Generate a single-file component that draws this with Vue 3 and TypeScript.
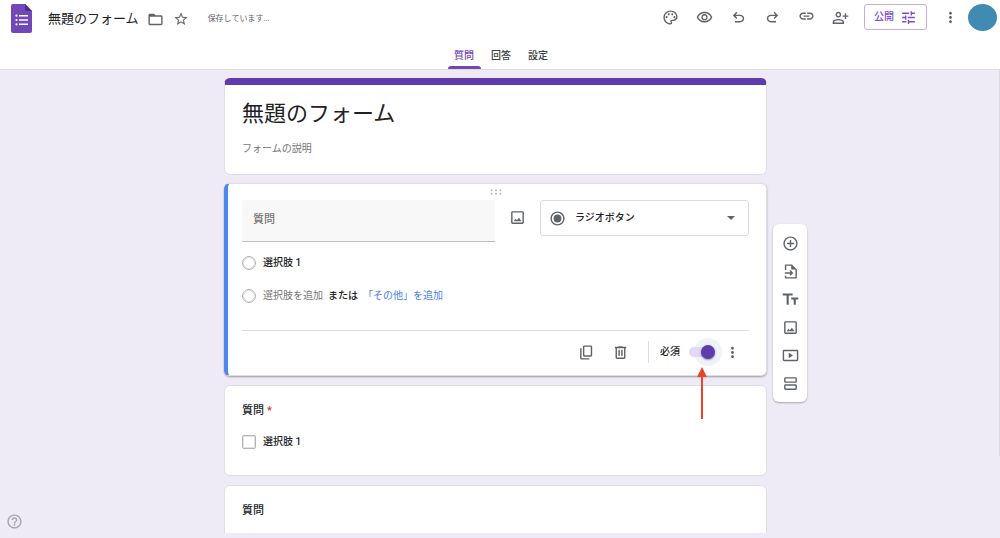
<script setup lang="ts">
import { ref } from 'vue'

interface Icon {
  label: string
  d: string
}

const tabs = ['質問', '回答', '設定']
const activeTab = ref('質問')
const formTitle = ref('無題のフォーム')
const description = ref('')
const question = ref('')
const questionType = ref('radio')
const required = ref(true)

const imagePath =
  'M19 5v14H5V5h14m0-2H5c-1.1 0-2 .9-2 2v14c0 1.1.9 2 2 2h14c1.1 0 2-.9 2-2V5c0-1.1-.9-2-2-2zM6.5 17.2l2.7-3.4 2 2.2 2.8-3.6 3.7 4.8z'
const morePath =
  'M12 8c1.1 0 2-.9 2-2s-.9-2-2-2-2 .9-2 2 .9 2 2 2zm0 2c-1.1 0-2 .9-2 2s.9 2 2 2 2-.9 2-2-.9-2-2-2zm0 6c-1.1 0-2 .9-2 2s.9 2 2 2 2-.9 2-2-.9-2-2-2z'

const headerActions: Icon[] = [
  {
    label: 'テーマをカスタマイズ',
    d: 'M12 22C6.49 22 2 17.51 2 12S6.49 2 12 2s10 4.04 10 9c0 3.31-2.69 6-6 6h-1.77c-.28 0-.5.22-.5.5 0 .12.05.23.13.33.41.47.64 1.06.64 1.67A2.5 2.5 0 0 1 12 22zm0-18c-4.41 0-8 3.59-8 8s3.59 8 8 8c.28 0 .5-.22.5-.5a.54.54 0 0 0-.14-.35c-.41-.46-.63-1.05-.63-1.65a2.5 2.5 0 0 1 2.5-2.5H16c2.21 0 4-1.79 4-4 0-3.86-3.59-7-8-7zM6.5 10a1.5 1.5 0 1 1 0 3 1.5 1.5 0 0 1 0-3zM9.5 6a1.5 1.5 0 1 1 0 3 1.5 1.5 0 0 1 0-3zM14.5 6a1.5 1.5 0 1 1 0 3 1.5 1.5 0 0 1 0-3zM17.5 10a1.5 1.5 0 1 1 0 3 1.5 1.5 0 0 1 0-3z',
  },
  {
    label: 'プレビュー',
    d: 'M12 6c3.79 0 7.17 2.13 8.82 5.5C19.17 14.87 15.79 17 12 17s-7.17-2.13-8.82-5.5C4.83 8.13 8.21 6 12 6m0-2C7 4 2.73 7.11 1 11.5 2.73 15.89 7 19 12 19s9.27-3.11 11-7.5C21.27 7.11 17 4 12 4zm0 5c1.38 0 2.5 1.12 2.5 2.5S13.38 14 12 14s-2.5-1.12-2.5-2.5S10.62 9 12 9m0-2c-2.48 0-4.5 2.02-4.5 4.5S9.52 16 12 16s4.5-2.02 4.5-4.5S14.48 7 12 7z',
  },
  {
    label: '元に戻す',
    d: 'M7 19v-2h7.1q1.575 0 2.738-1T18 13.5 16.838 11 14.1 10H7.8l2.6 2.6L9 14 4 9l5-5 1.4 1.4L7.8 8h6.3q2.425 0 4.163 1.575T20 13.5t-1.737 3.925T14.1 19z',
  },
  {
    label: 'やり直す',
    d: 'M17 19v-2H9.9q-1.575 0-2.738-1T6 13.5 7.162 11 9.9 10h6.3l-2.6 2.6L15 14l5-5-5-5-1.4 1.4L16.2 8H9.9q-2.425 0-4.163 1.575T4 13.5t1.737 3.925T9.9 19z',
  },
  {
    label: '回答者へのリンクをコピー',
    d: 'M3.9 10c0-1.71 1.39-3.1 3.1-3.1h4V5H7c-2.76 0-5 2.24-5 5s2.24 5 5 5h4v-1.9H7c-1.71 0-3.1-1.39-3.1-3.1zM8 11h8V9H8v2zm9-6h-4v1.9h4c1.71 0 3.1 1.39 3.1 3.1s-1.39 3.1-3.1 3.1h-4V15h4c2.76 0 5-2.24 5-5s-2.24-5-5-5z',
  },
  {
    label: '共同編集者を追加',
    d: 'M20 9V6h-2v3h-3v2h3v3h2v-3h3V9h-3zM9 12c2.21 0 4-1.79 4-4s-1.79-4-4-4-4 1.79-4 4 1.79 4 4 4zm0-6c1.1 0 2 .9 2 2s-.9 2-2 2-2-.9-2-2 .9-2 2-2zm0 8c-2.67 0-8 1.34-8 4v3h16v-3c0-2.66-5.33-4-8-4zm6 5H3v-1c.2-.71 3.3-2 6-2s5.8 1.29 6 2z',
  },
]

const sideTools: Icon[] = [
  {
    label: '質問を追加',
    d: 'M13 7h-2v4H7v2h4v4h2v-4h4v-2h-4V7zm-1-5C6.48 2 2 6.48 2 12s4.48 10 10 10 10-4.48 10-10S17.52 2 12 2zm0 18c-4.41 0-8-3.59-8-8s3.59-8 8-8 8 3.59 8 8-3.59 8-8 8z',
  },
  {
    label: '質問をインポート',
    d: 'M14 2H5.5C4.600 2 4 2.600 4 3.500V10h2V4h7v5h6v11H6v-2H4v2.500c0 .9.6 1.500 1.500 1.500h14c.9 0 1.500-.6 1.500-1.500V9zM12 10l-1.400 1.400 1.600 1.600H4v2h8.200l-1.600 1.600L12 18l4-4z',
  },
  {
    label: 'タイトルと説明を追加',
    d: 'M1 3.500v3h5.500v13h3v-13H15v-3H1zm22 5.500H13v3h3.500v7.500h3V12H23V9z',
  },
  { label: '画像を追加', d: imagePath },
  {
    label: '動画を追加',
    d: 'M21 4H3c-1.100 0-2 .9-2 2v12c0 1.100.9 2 2 2h18c1.100 0 2-.9 2-2V6c0-1.100-.9-2-2-2zm0 14H3V6h18v12zM9.500 8v8l6-4z',
  },
  {
    label: 'セクションを追加',
    d: 'M19 13H5c-1.100 0-2 .9-2 2v4c0 1.100.9 2 2 2h14c1.100 0 2-.9 2-2v-4c0-1.100-.9-2-2-2zm0 6H5v-4h14v4zM19 3H5c-1.100 0-2 .9-2 2v4c0 1.100.9 2 2 2h14c1.100 0 2-.9 2-2V5c0-1.100-.9-2-2-2zm0 6H5V5h14v4z',
  },
]
</script>

<template>
  <div class="page">
    <header class="header">
      <div class="bar">
        <a class="logo" href="#" aria-label="フォーム ホーム">
          <svg width="21" height="29" viewBox="0 0 21 29">
            <path d="M2 0h12l7 7v20a2 2 0 0 1-2 2H2a2 2 0 0 1-2-2V2a2 2 0 0 1 2-2z" fill="#7248b9" />
            <path d="M14 0l7 7h-7z" fill="#4f2d8c" />
            <g fill="#fff">
              <circle cx="5.500" cy="11.700" r="1.100" />
              <circle cx="5.500" cy="16" r="1.100" />
              <circle cx="5.500" cy="20.300" r="1.100" />
              <path d="M8 10.900h9v1.600H8zM8 15.200h9v1.600H8zM8 19.500h9v1.600H8z" />
            </g>
          </svg>
        </a>
        <h1 class="doc-title">{{ formTitle }}</h1>
        <button class="icon-btn folder" type="button" aria-label="フォルダに移動">
          <svg class="icon" viewBox="0 0 24 24">
            <path d="M20 6h-8l-2-2H4c-1.100 0-2 .9-2 2v12c0 1.100.9 2 2 2h16c1.100 0 2-.9 2-2V8c0-1.100-.9-2-2-2zm0 12H4V8h16z" />
          </svg>
        </button>
        <button class="icon-btn star" type="button" aria-label="スター">
          <svg class="icon" viewBox="0 0 24 24">
            <path d="M22 9.240l-7.190-.62L12 2 9.190 8.630 2 9.240l5.460 4.730L5.820 21 12 17.270 18.180 21l-1.630-7.030L22 9.240zM12 15.400l-3.760 2.270 1-4.280-3.320-2.880 4.380-.38L12 6.100l1.710 4.040 4.380.38-3.320 2.880 1 4.280L12 15.400z" />
          </svg>
        </button>
        <span class="saving">保存しています...</span>

        <div class="actions">
          <button v-for="a in headerActions" :key="a.label" class="icon-btn action" type="button" :aria-label="a.label">
            <svg class="icon" viewBox="0 0 24 24"><path :d="a.d" /></svg>
          </button>
        </div>
        <button class="publish" type="button">
          公開
          <svg class="icon" viewBox="0 0 24 24">
            <path d="M3 17v2h6v-2H3zM3 5v2h10V5H3zm10 16v-2h8v-2h-8v-2h-2v6h2zM7 9v2H3v2h4v2h2V9H7zm14 4v-2H11v2h10zm-6-4h2V7h4V5h-4V3h-2v6z" />
          </svg>
        </button>
        <button class="icon-btn menu" type="button" aria-label="その他">
          <svg class="icon" viewBox="0 0 24 24"><path :d="morePath" /></svg>
        </button>
        <button class="avatar" type="button" aria-label="アカウント"></button>
      </div>
      <nav class="tabs">
        <button
          v-for="t in tabs"
          :key="t"
          type="button"
          class="tab"
          :class="{ active: t === activeTab }"
          @click="activeTab = t"
        >
          {{ t }}
        </button>
      </nav>
    </header>

    <main class="canvas">
      <div class="column">
        <section class="card title-card">
          <input v-model="formTitle" class="form-title" type="text" aria-label="フォームのタイトル" />
          <input v-model="description" class="form-desc" type="text" placeholder="フォームの説明" aria-label="フォームの説明" />
        </section>

        <section class="card editing">
          <svg class="drag" width="12" height="6" viewBox="0 0 12 6" fill="#b4b6b9">
            <circle cx="1.500" cy="1.200" r="1" />
            <circle cx="6" cy="1.200" r="1" />
            <circle cx="10.500" cy="1.200" r="1" />
            <circle cx="1.500" cy="4.800" r="1" />
            <circle cx="6" cy="4.800" r="1" />
            <circle cx="10.500" cy="4.800" r="1" />
          </svg>
          <div class="question-row">
            <input v-model="question" class="question-input" type="text" placeholder="質問" aria-label="質問" />
            <button class="icon-btn add-image" type="button" aria-label="画像を追加">
              <svg class="icon" viewBox="0 0 24 24"><path :d="imagePath" /></svg>
            </button>
            <div class="type-box">
              <svg class="icon" viewBox="0 0 24 24">
                <circle cx="12" cy="12" r="9" fill="none" stroke="currentColor" stroke-width="2" />
                <circle cx="12" cy="12" r="5.500" />
              </svg>
              <select v-model="questionType" class="type-select" aria-label="質問の形式">
                <option value="radio">ラジオボタン</option>
              </select>
              <svg class="caret" width="8" height="4" viewBox="0 0 8 4"><path d="M0 0h8L4 4z" fill="#5f6368" /></svg>
            </div>
          </div>
          <div class="option first">
            <input id="edit-option" class="choice round" type="radio" name="edit" />
            <label for="edit-option">選択肢 1</label>
          </div>
          <div class="option second">
            <input class="choice round" type="radio" name="edit" aria-label="選択肢を追加" />
            <button class="text-btn muted" type="button">選択肢を追加</button>
            <span>または</span>
            <button class="text-btn link" type="button">「その他」を追加</button>
          </div>
          <footer class="card-footer">
            <button class="icon-btn foot" type="button" aria-label="コピーを作成">
              <svg class="icon" viewBox="0 0 24 24">
                <path d="M9 18q-.825 0-1.412-.587T7 16V4q0-.825.588-1.412T9 2h9q.825 0 1.413.588T20 4v12q0 .825-.587 1.413T18 18zm0-2h9V4H9zm-4 6q-.825 0-1.412-.587T3 20V6h2v14h11v2z" />
              </svg>
            </button>
            <button class="icon-btn foot" type="button" aria-label="削除">
              <svg class="icon" viewBox="0 0 24 24">
                <path d="M15 4V3H9v1H4v2h1v13c0 1.100.9 2 2 2h10c1.100 0 2-.9 2-2V6h1V4h-5zm2 15H7V6h10v13zM9 8h2v9H9zm4 0h2v9h-2z" />
              </svg>
            </button>
            <span class="rule"></span>
            <label class="required-label" for="required">必須</label>
            <span class="switch-wrap">
              <input id="required" v-model="required" class="switch" type="checkbox" />
              <svg class="pointer" width="12" height="52" viewBox="0 0 12 52" aria-hidden="true">
                <path d="M6 0l5 10H7v42H5V10H1z" fill="#ea4327" />
              </svg>
            </span>
            <button class="icon-btn more" type="button" aria-label="その他のオプション">
              <svg class="icon" viewBox="0 0 24 24"><path :d="morePath" /></svg>
            </button>
          </footer>
        </section>

        <section class="card plain">
          <h2 class="question-title">質問<span class="star-mark">*</span></h2>
          <div class="option boxed">
            <input id="check-option" class="choice" type="checkbox" />
            <label for="check-option">選択肢 1</label>
          </div>
        </section>

        <section class="card plain">
          <h2 class="question-title">質問</h2>
        </section>
      </div>

      <aside class="tools">
        <button v-for="t in sideTools" :key="t.label" class="icon-btn tool" type="button" :aria-label="t.label">
          <svg class="icon" viewBox="0 0 24 24"><path :d="t.d" /></svg>
        </button>
      </aside>
    </main>

    <span class="scroll-edge"></span>
    <button class="icon-btn help" type="button" aria-label="ヘルプ">
      <svg class="icon" viewBox="0 0 24 24">
        <path d="M11 18h2v-2h-2v2zm1-16C6.480 2 2 6.480 2 12s4.480 10 10 10 10-4.480 10-10S17.520 2 12 2zm0 18c-4.410 0-8-3.590-8-8s3.590-8 8-8 8 3.590 8 8-3.590 8-8 8zm0-14c-2.210 0-4 1.790-4 4h2c0-1.100.9-2 2-2s2 .9 2 2c0 2-3 1.750-3 5h2c0-2.250 3-2.500 3-5 0-2.210-1.790-4-4-4z" />
      </svg>
    </button>
  </div>
</template>

<style>
body {
  margin: 0;
  background: #eeebf6;
}
</style>

<style scoped>
.page {
  position: relative;
  display: flex;
  flex-direction: column;
  height: 100vh;
  box-sizing: border-box;
  padding-bottom: 5px;
  background: #eeebf6;
  color: #202124;
  font-family: Roboto, "Noto Sans CJK JP", sans-serif;
  font-size: 10px;
  font-weight: 500;
  line-height: 20px;
}

button,
input,
select {
  margin: 0;
  padding: 0;
  border: 0;
  background: none;
  color: inherit;
  font: inherit;
  box-sizing: border-box;
}

button {
  cursor: pointer;
}

.icon {
  display: block;
  width: 17px;
  height: 17px;
  fill: currentColor;
  flex: none;
}

.icon-btn {
  display: flex;
  align-items: center;
  justify-content: center;
  flex: none;
  color: #5f6368;
}

.header {
  flex: none;
  background: #fff;
  border-bottom: 1px solid #dddbe2;
}

.bar {
  display: flex;
  align-items: center;
  height: 34px;
  padding: 0 3px 0 11px;
}

.logo {
  display: flex;
  margin-top: 3px;
}

.doc-title {
  margin: 4px 0 0 16px;
  font-size: 13px;
  font-weight: 400;
  color: #202124;
  white-space: nowrap;
}

.folder {
  margin: 4px 0 0 8px;
}

.star {
  margin: 4px 0 0 9px;
}

.star .icon {
  width: 16px;
  height: 16px;
}

.saving {
  margin: 4px 0 0 19px;
  font-size: 8px;
  font-weight: 400;
  color: #5f6368;
  white-space: nowrap;
}

.actions {
  display: flex;
  margin-left: auto;
  padding-right: 7px;
}

.action {
  width: 34px;
  height: 34px;
}

.publish {
  display: flex;
  align-items: center;
  justify-content: center;
  gap: 6px;
  width: 63px;
  height: 26px;
  border: 1px solid #c9a9f5;
  border-radius: 3px;
  color: #7b4fd0;
}

.menu {
  width: 34px;
  margin-left: 6px;
}

.avatar {
  width: 29px;
  height: 27px;
  margin-left: 1px;
  border-radius: 50%;
  background: #3f8bb1;
}

.tabs {
  display: flex;
  justify-content: center;
  gap: 1px;
  height: 35px;
  padding-left: 2px;
}

.tab {
  position: relative;
  width: 36px;
  padding-top: 9px;
  color: #3c4043;
}

.tab.active {
  color: #7248b9;
}

.tab.active::after {
  content: "";
  position: absolute;
  left: 2px;
  right: 1px;
  bottom: 0;
  height: 3px;
  border-radius: 3px 3px 0 0;
  background: #7248b9;
}

.canvas {
  flex: 1;
  min-height: 0;
  overflow: auto;
  scrollbar-width: none;
  display: grid;
  grid-template-columns: 1fr minmax(0, 543px) 1fr;
  align-items: start;
  padding: 8px 9px 0 0;
}

.column {
  grid-column: 2;
  display: flex;
  flex-direction: column;
  gap: 9px;
}

.card {
  background: #fff;
  border: 1px solid #e0dde8;
  border-radius: 6px;
  box-sizing: border-box;
  padding: 0 17px;
}

.title-card {
  display: flex;
  flex-direction: column;
  border-top: 7px solid #5f3bae;
  margin-bottom: -1px;
  padding-top: 13px;
  padding-bottom: 15px;
}

.form-title {
  height: 32px;
  font-size: 22px;
  font-weight: 400;
  line-height: 32px;
}

.form-desc {
  height: 20px;
  margin-top: 9px;
  font-weight: 400;
}

.form-desc::placeholder,
.question-input::placeholder {
  color: #757575;
  opacity: 1;
}

.editing {
  position: relative;
  border-left: 4px solid #4f86ec;
  padding: 5px 17px 0 14px;
  box-shadow: 0 1px 2px rgba(0, 0, 0, 0.35);
}

.drag {
  display: block;
  margin: 0 auto;
}

.question-row {
  display: flex;
  align-items: flex-start;
  margin-top: 5px;
}

.question-input {
  flex: 1;
  min-width: 0;
  height: 42px;
  padding: 0 11px 2px;
  background: #f8f8f8;
  border-bottom: 1px solid #bdbdbd;
  font-size: 11px;
}

.add-image {
  width: 45px;
  height: 35px;
}

.type-box {
  display: flex;
  align-items: center;
  gap: 9px;
  width: 209px;
  height: 36px;
  box-sizing: border-box;
  padding: 0 13px 0 8px;
  border: 1px solid #dadce0;
  border-radius: 3px;
  color: #5f6368;
}

.type-select {
  flex: 1;
  min-width: 0;
  height: 34px;
  appearance: none;
  color: #202124;
}

.option {
  display: flex;
  align-items: center;
  height: 20px;
  white-space: nowrap;
}

.first {
  margin-top: 11px;
}

.second {
  margin-top: 13px;
}

.choice {
  appearance: none;
  flex: none;
  width: 14px;
  height: 14px;
  margin-right: 7px;
  border: 1px solid #b3b3b3;
  border-radius: 2px;
  box-shadow: inset 0 0 0 1px #e4e4e4;
}

.round {
  border-radius: 50%;
}

.muted {
  margin-right: 5px;
  color: #757575;
  font-weight: 400;
}

.link {
  margin-left: 5px;
  color: #4a80e8;
  font-weight: 400;
}

.card-footer {
  display: flex;
  align-items: center;
  justify-content: flex-end;
  height: 45px;
  box-sizing: border-box;
  margin-top: 24px;
  padding-right: 8px;
  padding-bottom: 2px;
  border-top: 1px solid #dadce0;
}

.foot {
  width: 34px;
  height: 34px;
}

.rule {
  width: 1px;
  height: 22px;
  margin-left: 11px;
  background: #dadce0;
}

.required-label {
  margin: 0 9px 0 11px;
}

.switch-wrap {
  position: relative;
  display: flex;
}

.switch-wrap::before {
  content: "";
  position: absolute;
  left: 5px;
  top: -9px;
  width: 28px;
  height: 28px;
  border-radius: 50%;
  background: #edf2fc;
}

.switch {
  appearance: none;
  position: relative;
  width: 26px;
  height: 10px;
  border-radius: 5px;
  background: #e1d8f1;
}

.switch::before {
  content: "";
  position: absolute;
  left: -3px;
  top: -2px;
  width: 14px;
  height: 14px;
  border-radius: 50%;
  background: #fff;
  box-shadow: 0 1px 2px rgba(0, 0, 0, 0.4);
}

.switch:checked::before {
  left: 12px;
  background: #5f3bae;
}

.pointer {
  position: absolute;
  left: 7px;
  top: 20px;
  z-index: 1;
}

.more {
  width: 17px;
  margin-left: 9px;
}

.plain {
  min-height: 91px;
  padding-top: 15px;
}

.question-title {
  margin: 0;
  font-size: 11px;
  font-weight: 500;
}

.star-mark {
  margin-left: 3px;
  color: #d93025;
}

.boxed {
  margin-top: 11px;
}

.tools {
  grid-column: 3;
  display: flex;
  flex-direction: column;
  width: 34px;
  margin: 146px 0 0 6px;
  padding: 5px 0;
  border-radius: 6px;
  background: #fff;
  box-shadow: 0 1px 2px rgba(0, 0, 0, 0.3);
}

.tool {
  height: 28px;
}

.scroll-edge {
  position: absolute;
  right: 0;
  top: 70px;
  bottom: 82px;
  width: 1px;
  background: #dddbe2;
}

.help {
  position: absolute;
  left: 6px;
  bottom: 8px;
  color: #a5a3ad;
}
</style>
